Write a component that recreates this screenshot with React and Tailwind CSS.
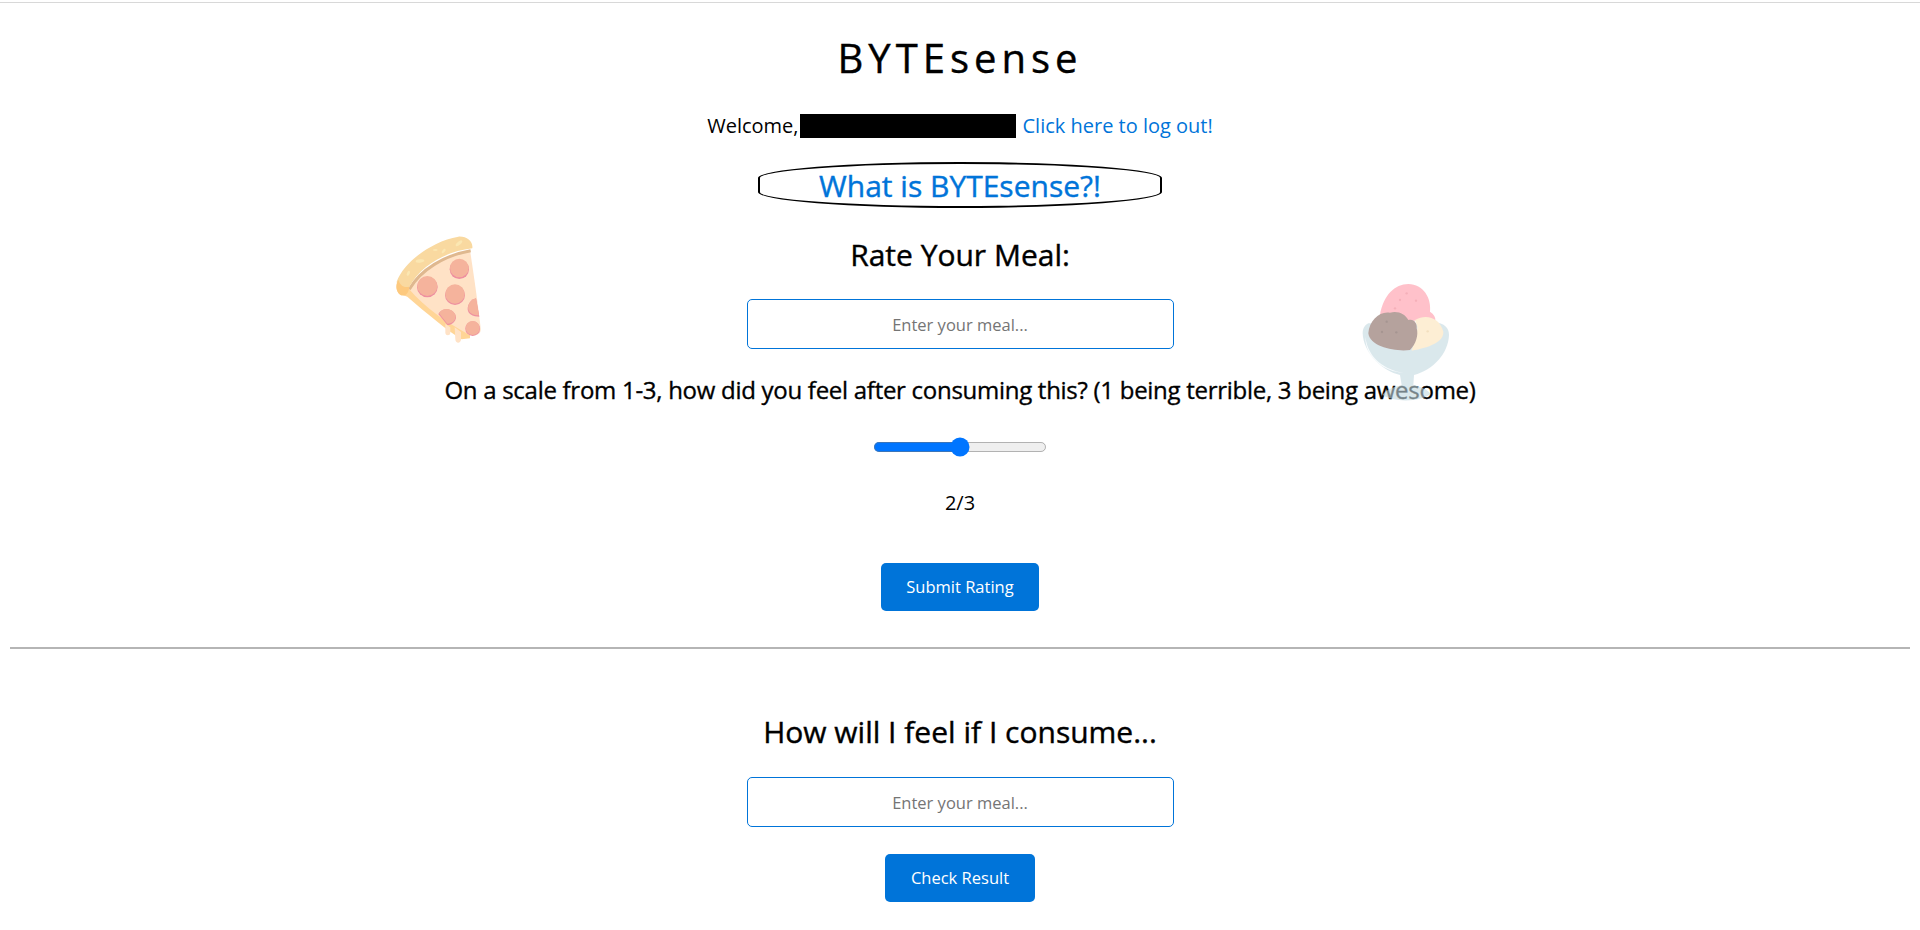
import React, { useState } from 'react';

// Pizza slice, hand drawn since no icon package has this emoji style
const PizzaIcon = () => (
  <svg viewBox="0 0 390 390" className="absolute left-[370px] top-[220px] w-[130px] h-[130px]">
    <path d="M85 180 C76 195 78 215 90 222 L112 230 C170 280 230 330 275 358 L300 355 L300 330 Z" fill="#ffd596" />
    <path d="M115 205 C150 150 220 105 300 90 C312 170 325 260 332 325 C334 345 315 350 295 343 C235 310 165 265 115 205 Z" fill="#ffe2c6" />
    <path d="M118 208 C150 150 225 105 302 92" fill="none" stroke="#dfb88f" strokeWidth="9" />
    <path d="M80 185 C100 130 180 65 265 50 C290 48 310 65 307 85 C225 95 155 135 118 200 C112 228 85 225 80 185 Z" fill="#f9d9a0" />
    <path d="M85 180 C76 195 78 215 90 224 C104 232 116 222 118 200 C100 205 90 195 85 180 Z" fill="#fdc97e" />
    <ellipse cx="150" cy="123" rx="13" ry="5" fill="#fbe7b2" transform="rotate(-5 150 123)" />
    <ellipse cx="267" cy="70" rx="12" ry="5" fill="#fbe7b2" transform="rotate(-40 267 70)" />
    <ellipse cx="221" cy="93" rx="8" ry="4" fill="#fbe7b2" transform="rotate(-50 221 93)" />
    <ellipse cx="196" cy="90" rx="7" ry="3" fill="#fbe7b2" />
    <ellipse cx="115" cy="160" rx="4" ry="8" fill="#fbe7b2" transform="rotate(25 115 160)" />
    <circle cx="268" cy="148" r="29" fill="#ee8fa0" />
    <circle cx="268" cy="144" r="28" fill="#f5b39c" />
    <circle cx="172" cy="201" r="31" fill="#ee8fa0" />
    <circle cx="172" cy="198" r="30" fill="#f5b39c" />
    <circle cx="255" cy="225" r="30" fill="#ee8fa0" />
    <circle cx="255" cy="222" r="29" fill="#f5b39c" />
    <path d="M205 282 C215 262 250 262 258 290 C258 305 245 315 232 315 Z" fill="#ee8fa0" />
    <path d="M207 280 C217 261 250 262 257 288 C257 302 245 312 232 311 Z" fill="#f5b39c" />
    <path d="M318 235 C295 240 285 270 300 282 C310 290 320 290 328 290 Z" fill="#ee8fa0" />
    <path d="M318 235 C296 240 287 266 301 278 C310 285 320 286 327 286 Z" fill="#f5b39c" />
    <circle cx="308" cy="326" r="22" fill="#ee8fa0" />
    <circle cx="308" cy="324" r="21" fill="#f5b39c" />
    <path d="M226 312 L241 322 L241 338 C241 348 226 348 226 338 Z" fill="#ffe2c6" />
    <path d="M254 322 L273 336 L273 358 C273 372 256 372 256 358 Z" fill="#ffe2c6" />
  </svg>
);

// Ice cream bowl, sits faded on top of the question text
const IceCreamIcon = () => (
  <svg viewBox="0 0 390 420" className="absolute left-[1340px] top-[270px] w-[130px] h-[140px] opacity-60">
    <path d="M68 190 C70 250 130 305 180 315 L185 345 C160 352 135 360 128 375 C160 397 240 397 272 372 C262 358 240 350 220 345 L222 315 C280 300 325 250 327 195 C327 175 315 165 300 160 L85 160 C75 165 68 175 68 190 Z" fill="#c3d9e1" />
    <path d="M76 200 C85 270 140 300 190 308 C135 305 75 265 76 200 Z" fill="#f4fafc" />
    <path d="M120 135 C130 75 165 42 205 42 C250 42 275 85 270 125 C282 132 287 142 286 152 L120 152 Z" fill="#ff99a8" />
    <circle cx="200" cy="70" r="3.5" fill="#f07c8c" />
    <circle cx="180" cy="90" r="3.5" fill="#f07c8c" />
    <circle cx="228" cy="92" r="3.5" fill="#f07c8c" />
    <circle cx="165" cy="115" r="3.5" fill="#f07c8c" />
    <path d="M215 242 C222 215 232 200 232 170 L225 150 C260 130 300 145 310 185 C312 215 270 232 215 242 Z" fill="#fce3b8" />
    <path d="M85 190 C88 150 120 122 150 128 C175 122 195 132 205 150 C222 145 232 160 230 175 C236 195 228 222 210 240 C170 246 90 232 85 190 Z" fill="#85655d" />
    <circle cx="140" cy="155" r="3.5" fill="#6b5049" />
    <circle cx="126" cy="186" r="3.5" fill="#6b5049" />
    <circle cx="169" cy="187" r="3.5" fill="#6b5049" />
    <circle cx="263" cy="184" r="3.5" fill="#eccb95" />
  </svg>
);

const App = () => {
  const [rating, setRating] = useState(2);

  return (
    <div className="relative min-h-[930px] bg-white text-black font-['Open_Sans',sans-serif] overflow-hidden">
      {/* Thin rule at the very top */}
      <div className="h-[3px] pt-[2px]">
        <div className="h-px bg-[#d8d8d8]"></div>
      </div>

      <PizzaIcon />

      <div className="relative flex flex-col items-center">
        <h1 className="mt-[27px] text-[40px] leading-[55px] tracking-[5px] [-webkit-text-stroke:0.4px_black]">BYTEsense</h1>

        {/* Welcome row */}
        <div className="mt-[27px] flex items-center h-[27px] text-[20px]">
          <span>Welcome,</span>
          <span className="ml-px w-[216px] h-6 bg-black"></span>
          <a href="#logout" className="ml-[7px] text-[#0074d9]">Click here to log out!</a>
        </div>

        <a
          href="#about"
          className="mt-[23px] flex items-center justify-center w-[404px] h-[46px] border-2 border-black rounded-[50%/35%] text-[30px] text-[#0074d9] [-webkit-text-stroke:0.4px_#0074d9]"
        >
          What is BYTEsense?!
        </a>

        {/* Rate form */}
        <h2 className="mt-[26px] text-[30px] leading-[41px] [-webkit-text-stroke:0.4px_black]">Rate Your Meal:</h2>
        <input
          type="text"
          placeholder="Enter your meal..."
          className="mt-[24px] w-[427px] h-[50px] border border-[#0074d9] rounded-[5px] text-center text-[16.5px] placeholder:text-[#757575] outline-none"
        />
        <p className="mt-[24px] text-[24px] leading-[33px] -tracking-[0.28px] [-webkit-text-stroke:0.35px_black]">
          On a scale from 1-3, how did you feel after consuming this? (1 being terrible, 3 being awesome)
        </p>
        <input
          type="range"
          min="1"
          max="3"
          value={rating}
          onChange={(e) => setRating(Number(e.target.value))}
          className="mt-[25px] w-[139px] [zoom:1.25]"
        />
        <div className="mt-[32px] text-[20px] leading-[27px]">{rating}/3</div>
        <button className="mt-[47px] w-[158px] h-[48px] bg-[#0074d9] text-white text-[16.5px] rounded-[5px]">
          Submit Rating
        </button>

        <hr className="mt-[36px] self-stretch mx-[10px] border-t-2 border-[#b5b5b5]" />

        {/* Check form */}
        <h2 className="mt-[62px] text-[30px] leading-[41px] [-webkit-text-stroke:0.4px_black]">How will I feel if I consume...</h2>
        <input
          type="text"
          placeholder="Enter your meal..."
          className="mt-[25px] w-[427px] h-[50px] border border-[#0074d9] rounded-[5px] text-center text-[16.5px] placeholder:text-[#757575] outline-none"
        />
        <button className="mt-[27px] w-[150px] h-[48px] bg-[#0074d9] text-white text-[16.5px] rounded-[5px]">
          Check Result
        </button>
      </div>

      <IceCreamIcon />
    </div>
  );
};

export default App;
